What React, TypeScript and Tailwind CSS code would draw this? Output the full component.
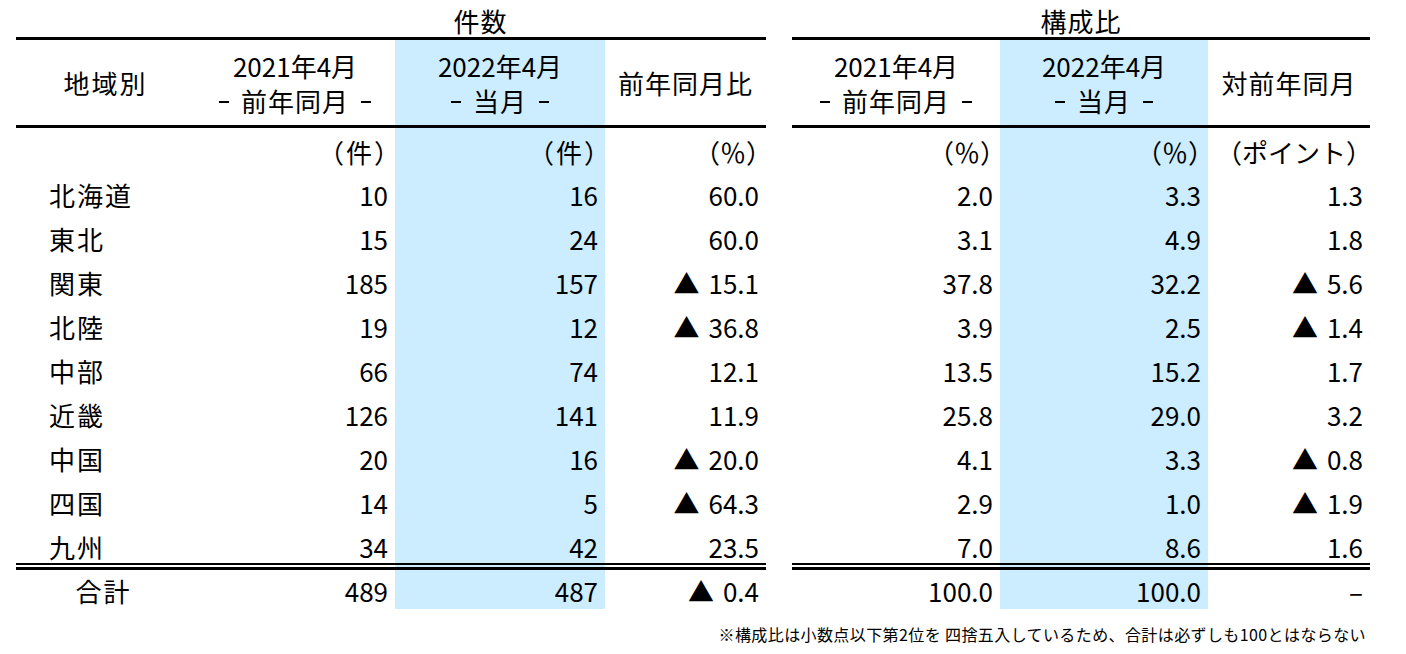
import React from "react";

const FONT = "font-['Noto_Sans_CJK_JP','Noto_Sans_CJK_SC',sans-serif]";
const BLUE = "bg-[#ccecff]";

const rows: string[][] = [
  ["北海道", "10", "16", "60.0", "2.0", "3.3", "1.3"],
  ["東北", "15", "24", "60.0", "3.1", "4.9", "1.8"],
  ["関東", "185", "157", "▲ 15.1", "37.8", "32.2", "▲ 5.6"],
  ["北陸", "19", "12", "▲ 36.8", "3.9", "2.5", "▲ 1.4"],
  ["中部", "66", "74", "12.1", "13.5", "15.2", "1.7"],
  ["近畿", "126", "141", "11.9", "25.8", "29.0", "3.2"],
  ["中国", "20", "16", "▲ 20.0", "4.1", "3.3", "▲ 0.8"],
  ["四国", "14", "5", "▲ 64.3", "2.9", "1.0", "▲ 1.9"],
  ["九州", "34", "42", "23.5", "7.0", "8.6", "1.6"],
];
const total = ["合計", "489", "487", "▲ 0.4", "100.0", "100.0", "–"];

const LEFT_COLS = "grid grid-cols-[179px_200px_210px_161px]";
const RIGHT_COLS = "grid grid-cols-[208px_208px_162px]";

function Line({ h }: { h: string }) {
  return <div className={`${h} bg-black`} />;
}

function TwoLine({ top, bottom }: { top: string; bottom: string }) {
  return (
    <div className="flex flex-col items-center leading-[35px]">
      <span>{top}</span>
      <span className="flex items-center gap-[12px]">
        <span className="mt-[3px] h-[2px] w-[10px] bg-black" />
        <span className="tracking-[1px]">{bottom}</span>
        <span className="mt-[3px] h-[2px] w-[10px] bg-black" />
      </span>
    </div>
  );
}

function HeaderCell({ children, blue }: { children: React.ReactNode; blue?: boolean }) {
  return (
    <div className={`flex h-[85px] items-center justify-center ${blue ? BLUE : ""}`}>
      {children}
    </div>
  );
}

function Num({ v, blue, className = "" }: { v: string; blue?: boolean; className?: string }) {
  const neg = v.startsWith("▲ ");
  return (
    <div className={`flex justify-end pr-[7px] ${blue ? BLUE : ""} ${className}`}>
      {neg && <span className="mr-[9px]">▲</span>}
      <span>{neg ? v.slice(2) : v}</span>
    </div>
  );
}

// unit label; the full-width brackets leave room on the right, so nudge them over
function Unit({ v, blue, shift = "" }: { v: string; blue?: boolean; shift?: string }) {
  return (
    <div className={`pt-[11px] text-right ${blue ? BLUE : ""}`}>
      <span className={`inline-block ${shift}`}>{v}</span>
    </div>
  );
}

function GapRow({ cols, blueIdx, n }: { cols: string; blueIdx: number; n: number }) {
  return (
    <div className={`${cols} h-[2px]`}>
      {Array.from({ length: n }).map((_, i) => (
        <div key={i} className={i === blueIdx ? BLUE : ""} />
      ))}
    </div>
  );
}

function LeftTable() {
  return (
    <div className="flex w-[750px] flex-col">
      <div className={`${LEFT_COLS} h-[37px] pt-[6px] leading-[30px]`}>
        <div />
        <div className="col-span-3 text-center tracking-[1px]">件数</div>
      </div>
      <Line h="h-[3px]" />
      <div className={LEFT_COLS}>
        <HeaderCell>
          <span className="tracking-[2px]">地域別</span>
        </HeaderCell>
        <HeaderCell>
          <TwoLine top="2021年4月" bottom="前年同月" />
        </HeaderCell>
        <HeaderCell blue>
          <TwoLine top="2022年4月" bottom="当月" />
        </HeaderCell>
        <HeaderCell>
          <span className="tracking-[1px]">前年同月比</span>
        </HeaderCell>
      </div>
      <Line h="h-[3px]" />
      <div className={`${LEFT_COLS} h-[39px] leading-[26px]`}>
        <div />
        <Unit v="（件）" shift="translate-x-[7px] tracking-[2px]" />
        <Unit v="（件）" blue shift="translate-x-[7px] tracking-[2px]" />
        <Unit v="（％）" shift="translate-x-[6px]" />
      </div>
      {rows.map((r) => (
        <div key={r[0]} className={`${LEFT_COLS} h-[44px] leading-[26px]`}>
          <div className="pl-[33px] pt-[15px] tracking-[2px]">{r[0]}</div>
          <Num v={r[1]} className="pt-[15px]" />
          <Num v={r[2]} blue className="pt-[15px]" />
          <Num v={r[3]} className="pt-[15px]" />
        </div>
      ))}
      <Line h="h-[2px]" />
      <GapRow cols={LEFT_COLS} blueIdx={2} n={4} />
      <Line h="h-[3px]" />
      <div className={`${LEFT_COLS} h-[39px] leading-[26px]`}>
        <div className="pr-[4px] pt-[8px] text-center tracking-[2px]">{total[0]}</div>
        <Num v={total[1]} className="pt-[8px]" />
        <Num v={total[2]} blue className="pt-[8px]" />
        <Num v={total[3]} className="pt-[8px]" />
      </div>
    </div>
  );
}

function RightTable() {
  return (
    <div className="flex w-[578px] flex-col">
      <div className="h-[37px] pt-[6px] text-center leading-[30px] tracking-[1px]">構成比</div>
      <Line h="h-[3px]" />
      <div className={RIGHT_COLS}>
        <HeaderCell>
          <TwoLine top="2021年4月" bottom="前年同月" />
        </HeaderCell>
        <HeaderCell blue>
          <TwoLine top="2022年4月" bottom="当月" />
        </HeaderCell>
        <HeaderCell>
          <span className="tracking-[1px]">対前年同月</span>
        </HeaderCell>
      </div>
      <Line h="h-[3px]" />
      <div className={`${RIGHT_COLS} h-[39px] leading-[26px]`}>
        <Unit v="（％）" shift="translate-x-[6px]" />
        <Unit v="（％）" blue shift="translate-x-[6px]" />
        <Unit v="（ポイント）" shift="translate-x-[2px]" />
      </div>
      {rows.map((r) => (
        <div key={r[0]} className={`${RIGHT_COLS} h-[44px] leading-[26px]`}>
          <Num v={r[4]} className="pt-[15px]" />
          <Num v={r[5]} blue className="pt-[15px]" />
          <Num v={r[6]} className="pt-[15px]" />
        </div>
      ))}
      <Line h="h-[2px]" />
      <GapRow cols={RIGHT_COLS} blueIdx={1} n={3} />
      <Line h="h-[3px]" />
      <div className={`${RIGHT_COLS} h-[39px] leading-[26px]`}>
        <Num v={total[4]} className="pt-[8px]" />
        <Num v={total[5]} blue className="pt-[8px]" />
        <Num v={total[6]} className="pt-[8px]" />
      </div>
    </div>
  );
}

export default function App() {
  return (
    <div className={`h-[654px] w-[1406px] bg-white pl-[16px] text-[26px] text-black ${FONT}`}>
      <div className="flex gap-[26px]">
        <LeftTable />
        <RightTable />
      </div>
      <p className="mt-[15px] w-[1354px] pr-[4px] text-right text-[16px] leading-[20px] tracking-[0.4px]">
        ※構成比は小数点以下第2位を 四捨五入しているため、合計は必ずしも100とはならない
      </p>
    </div>
  );
}
